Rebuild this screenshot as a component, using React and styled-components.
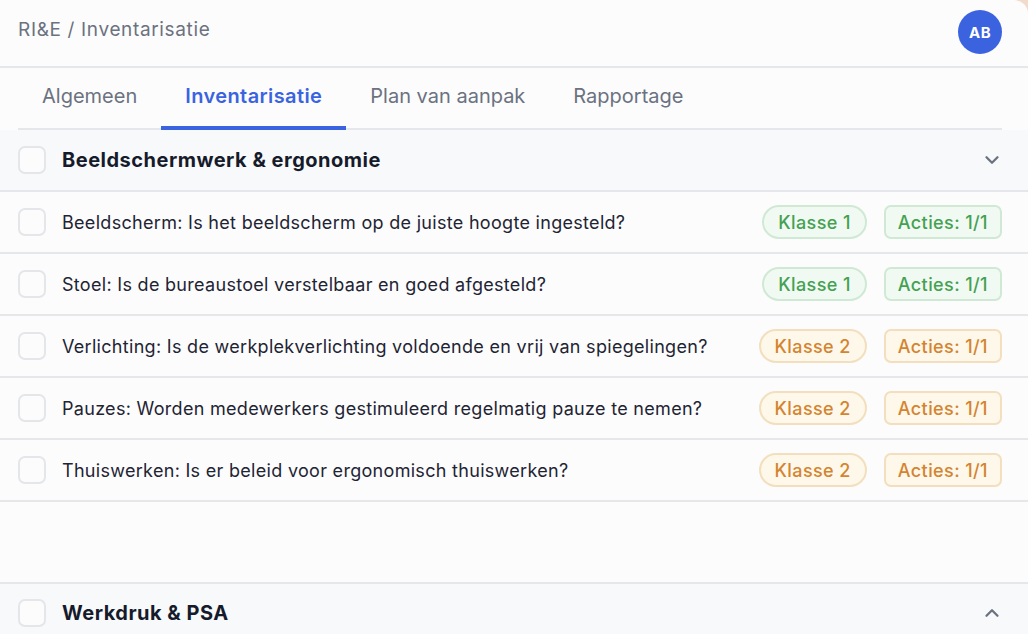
import React from 'react';
import styled, { createGlobalStyle, css } from 'styled-components';
import { ChevronDown, ChevronUp } from 'lucide-react';

const GlobalStyle = createGlobalStyle`
  html, body {
    margin: 0;
    padding: 0;
    background: #f1dccc;
    font-family: Inter, "Noto Sans", sans-serif;
    -webkit-font-smoothing: antialiased;
  }
  * { box-sizing: border-box; }
`;

const tones = {
  green: { color: '#45a152', bg: '#f1faf2', border: '#cfe9d4' },
  orange: { color: '#d4842f', bg: '#fef8ea', border: '#f3dfbd' },
};

const items = [
  { text: 'Beeldscherm: Is het beeldscherm op de juiste hoogte ingesteld?', klasse: 1, tone: 'green' },
  { text: 'Stoel: Is de bureaustoel verstelbaar en goed afgesteld?', klasse: 1, tone: 'green' },
  { text: 'Verlichting: Is de werkplekverlichting voldoende en vrij van spiegelingen?', klasse: 2, tone: 'orange' },
  { text: 'Pauzes: Worden medewerkers gestimuleerd regelmatig pauze te nemen?', klasse: 2, tone: 'orange' },
  { text: 'Thuiswerken: Is er beleid voor ergonomisch thuiswerken?', klasse: 2, tone: 'orange' },
];

const tabs = ['Algemeen', 'Inventarisatie', 'Plan van aanpak', 'Rapportage'];

const App = () => {
  return (
    <>
      <GlobalStyle />
      <Page>
        <TopBar>
          <Crumb>RI&amp;E / Inventarisatie</Crumb>
          <Avatar>AB</Avatar>
        </TopBar>
        <Tabs>
          {tabs.map((t) => (
            <Tab key={t} $active={t === 'Inventarisatie'}>{t}</Tab>
          ))}
        </Tabs>

        <SectionHeader>
          <Checkbox />
          <SectionTitle>Beeldschermwerk &amp; ergonomie</SectionTitle>
          <Chevron><ChevronDown size={22} strokeWidth={2.5} /></Chevron>
        </SectionHeader>
        {items.map((it) => (
          <Row key={it.text}>
            <Checkbox />
            <Question>{it.text}</Question>
            <Badges>
              <Badge $tone={it.tone} $pill>Klasse {it.klasse}</Badge>
              <Badge $tone={it.tone}>Acties: 1/1</Badge>
            </Badges>
          </Row>
        ))}
        <Spacer />
        <SectionHeader $top>
          <Checkbox />
          <SectionTitle>Werkdruk &amp; PSA</SectionTitle>
          <Chevron><ChevronUp size={22} strokeWidth={2.5} /></Chevron>
        </SectionHeader>
      </Page>
    </>
  );
};

export default App;

const Page = styled.div`
  height: 100vh;
  overflow: hidden;
  background: #fcfcfd;
  border-top-right-radius: 14px;
  display: flex;
  flex-direction: column;
`;

const TopBar = styled.header`
  height: 68px;
  flex-shrink: 0;
  display: flex;
  align-items: center;
  justify-content: space-between;
  padding: 0 26px 8px 18px;
  border-bottom: 2px solid #e6e7eb;
`;

const Crumb = styled.div`
  font-size: 19px;
  letter-spacing: 0.65px;
  color: #6b7280;
`;

const Avatar = styled.div`
  width: 44px;
  height: 44px;
  border-radius: 50%;
  background: #3b63e0;
  color: #fff;
  font-weight: 700;
  font-size: 15px;
  display: flex;
  align-items: center;
  justify-content: center;
  letter-spacing: 0.5px;
  margin-top: 6px;
`;

const Tabs = styled.nav`
  display: flex;
  height: 62px;
  flex-shrink: 0;
  margin: 0 26px 0 18px;
  border-bottom: 2px solid #e6e7eb;
`;

const Tab = styled.div`
  padding: 0 24px 3px;
  display: flex;
  align-items: center;
  font-size: 20px;
  color: #6b7280;
  margin-bottom: -2px;
  border-bottom: 4px solid transparent;
  ${(p) =>
    p.$active &&
    css`
      color: #3b63e0;
      font-weight: 600;
      letter-spacing: 0.4px;
      border-bottom-color: #3b63e0;
    `}
`;

const SectionHeader = styled.div`
  height: 62px;
  flex-shrink: 0;
  display: flex;
  align-items: center;
  gap: 16px;
  padding: 0 26px 0 18px;
  background: #f8f9fb;
  border-bottom: 2px solid #e6e7eb;
  ${(p) => p.$top && css`border-top: 2px solid #e6e7eb;`}
`;

const SectionTitle = styled.div`
  flex: 1;
  font-size: 20px;
  letter-spacing: 0.5px;
  font-weight: 700;
  color: #161b2b;
`;

const Chevron = styled.div`
  color: #6b7280;
  display: flex;
  align-items: center;
  margin-right: -1px;
`;

const Checkbox = styled.div`
  width: 28px;
  height: 28px;
  flex-shrink: 0;
  border: 2px solid #e4e6ea;
  border-radius: 7px;
  background: #fcfcfd;
`;

const Row = styled.div`
  height: 62px;
  flex-shrink: 0;
  display: flex;
  align-items: center;
  gap: 16px;
  padding: 0 26px 0 18px;
  border-bottom: 2px solid #e6e7eb;
`;

const Question = styled.div`
  flex: 1;
  font-size: 18px;
  letter-spacing: 0.3px;
  color: #1f2433;
  white-space: nowrap;
`;

const Badges = styled.div`
  display: flex;
  gap: 17px;
`;

const Badge = styled.div`
  height: 34px;
  display: flex;
  align-items: center;
  padding: 0 ${(p) => (p.$pill ? '14px' : '12px')};
  font-size: 18px;
  letter-spacing: 0.4px;
  font-weight: 500;
  color: ${(p) => tones[p.$tone].color};
  background: ${(p) => tones[p.$tone].bg};
  border: 2px solid ${(p) => tones[p.$tone].border};
  border-radius: ${(p) => (p.$pill ? '17px' : '7px')};
`;

const Spacer = styled.div`
  height: 80px;
  flex-shrink: 0;
`;
